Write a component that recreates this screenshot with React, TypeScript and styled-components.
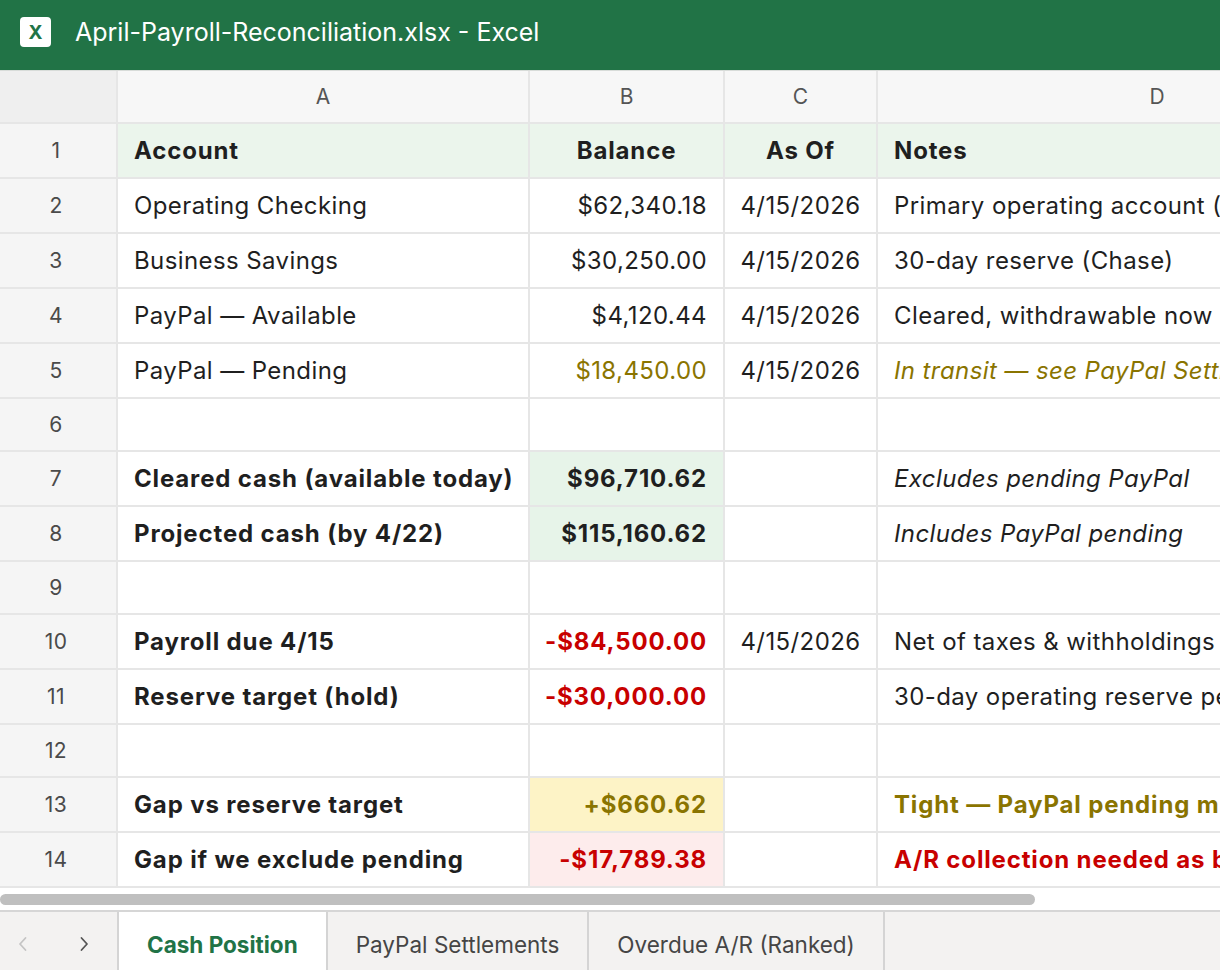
import React from 'react';
import styled, { createGlobalStyle, css } from 'styled-components';

const GlobalStyle = createGlobalStyle`
  html, body {
    margin: 0;
    padding: 0;
    background: #ffffff;
  }
  body {
    font-family: Inter, "Noto Sans", "Liberation Sans", sans-serif;
    color: #1f1f1f;
    overflow: hidden;
  }
`;

// Palette
const GREEN = '#217346';
const GOLD = '#8a7400';
const RED = '#c80000';
const GRID = '#e6e6e6';

type Tone = 'default' | 'gold' | 'red';
type Fill = 'none' | 'green' | 'yellow' | 'pink' | 'head';
type Align = 'left' | 'center' | 'right';

interface CellData {
  text?: string;
  align?: Align;
  bold?: boolean;
  italic?: boolean;
  tone?: Tone;
  fill?: Fill;
}

interface RowData {
  num: number;
  empty?: boolean;
  cells: CellData[];
}

const fills: Record<Fill, string> = {
  none: '#ffffff',
  green: '#e7f4e9',
  yellow: '#fdf3c6',
  pink: '#fdecec',
  head: '#ebf5ec',
};

const tones: Record<Tone, string> = {
  default: '#1f1f1f',
  gold: GOLD,
  red: RED,
};

const Window = styled.div`
  display: flex;
  flex-direction: column;
  width: 1220px;
  height: 970px;
  overflow: hidden;
`;

const TitleBar = styled.header`
  display: flex;
  align-items: center;
  gap: 24px;
  height: 71px;
  padding: 0 0 6px 20px;
  box-sizing: border-box;
  background: ${GREEN};
  border-bottom: 1px solid #d8dcd9;
  flex-shrink: 0;
`;

const AppIcon = styled.div`
  display: flex;
  align-items: center;
  justify-content: center;
  width: 31px;
  height: 30px;
  border-radius: 4px;
  background: #ffffff;
  color: ${GREEN};
  font-weight: 700;
  font-size: 19px;
`;

const Title = styled.h1`
  margin: 0;
  color: #ffffff;
  font-size: 25px;
  font-weight: 400;
  letter-spacing: 0;
`;

const Sheet = styled.div`
  display: grid;
  grid-template-columns: 118px 412px 195px 153px 560px;
  width: max-content;
  flex-shrink: 0;
`;

const Corner = styled.div`
  height: 51px;
  background: #efefef;
  border-right: 2px solid ${GRID};
  border-bottom: 2px solid ${GRID};
`;

const ColHeader = styled.div`
  display: flex;
  align-items: center;
  justify-content: center;
  height: 51px;
  background: #f7f7f7;
  color: #555555;
  font-size: 21px;
  border-right: 2px solid ${GRID};
  border-bottom: 2px solid ${GRID};
`;

const RowHeader = styled.div<{ $empty?: boolean }>`
  display: flex;
  align-items: center;
  justify-content: center;
  height: ${({ $empty }) => ($empty ? 51 : 53)}px;
  padding-right: 4px;
  background: #f5f5f5;
  color: #4a4a4a;
  font-size: 21px;
  letter-spacing: 0.4px;
  border-right: 2px solid ${GRID};
  border-bottom: 2px solid ${GRID};
`;

const Cell = styled.div<{
  $empty?: boolean;
  $align: Align;
  $bold?: boolean;
  $italic?: boolean;
  $tone: Tone;
  $fill: Fill;
}>`
  display: flex;
  align-items: center;
  justify-content: ${({ $align }) =>
    $align === 'right' ? 'flex-end' : $align === 'center' ? 'center' : 'flex-start'};
  height: ${({ $empty }) => ($empty ? 51 : 53)}px;
  padding: 0 16px;
  background: ${({ $fill }) => fills[$fill]};
  color: ${({ $tone }) => tones[$tone]};
  font-size: 24px;
  font-weight: ${({ $bold }) => ($bold ? 700 : 400)};
  letter-spacing: ${({ $bold }) => ($bold ? 0.85 : 0.4)}px;
  white-space: nowrap;
  overflow: hidden;
  border-right: 2px solid ${GRID};
  border-bottom: 2px solid ${GRID};
  ${({ $italic }) =>
    $italic &&
    css`
      font-style: italic;
    `}
`;

const ScrollTrack = styled.div`
  display: flex;
  align-items: center;
  height: 22px;
  background: #ffffff;
  border-bottom: 2px solid #d6d6d6;
  flex-shrink: 0;
`;

const ScrollThumb = styled.div`
  width: 1035px;
  height: 11px;
  border-radius: 6px;
  background: #bfbfbf;
`;

const TabBar = styled.nav`
  display: flex;
  flex: 1;
  background: #f3f2f1;
`;

const NavButtons = styled.div`
  display: flex;
  align-items: center;
  justify-content: space-between;
  width: 117px;
  padding: 6px 26px 0 16px;
  box-sizing: border-box;
`;

const NavArrow = styled.span<{ $disabled?: boolean }>`
  display: flex;
  color: ${({ $disabled }) => ($disabled ? '#c4c4c4' : '#555555')};
`;

const Tab = styled.div<{ $active?: boolean }>`
  display: flex;
  align-items: center;
  padding: 6px 28px 0;
  font-size: 22.5px;
  border-left: 2px solid #d4d4d4;
  background: ${({ $active }) => ($active ? '#ffffff' : 'transparent')};
  color: ${({ $active }) => ($active ? GREEN : '#454545')};
  font-weight: ${({ $active }) => ($active ? 700 : 400)};
  white-space: nowrap;
`;

const TabEnd = styled.div`
  border-left: 2px solid #d4d4d4;
`;

const rows: RowData[] = [
  {
    num: 1,
    cells: [
      { text: 'Account', bold: true, fill: 'head' },
      { text: 'Balance', bold: true, align: 'center', fill: 'head' },
      { text: 'As Of', bold: true, align: 'center', fill: 'head' },
      { text: 'Notes', bold: true, fill: 'head' },
    ],
  },
  {
    num: 2,
    cells: [
      { text: 'Operating Checking' },
      { text: '$62,340.18', align: 'right' },
      { text: '4/15/2026', align: 'center' },
      { text: 'Primary operating account (Chase)' },
    ],
  },
  {
    num: 3,
    cells: [
      { text: 'Business Savings' },
      { text: '$30,250.00', align: 'right' },
      { text: '4/15/2026', align: 'center' },
      { text: '30-day reserve (Chase)' },
    ],
  },
  {
    num: 4,
    cells: [
      { text: 'PayPal — Available' },
      { text: '$4,120.44', align: 'right' },
      { text: '4/15/2026', align: 'center' },
      { text: 'Cleared, withdrawable now' },
    ],
  },
  {
    num: 5,
    cells: [
      { text: 'PayPal — Pending' },
      { text: '$18,450.00', align: 'right', tone: 'gold' },
      { text: '4/15/2026', align: 'center' },
      { text: 'In transit — see PayPal Settlements', italic: true, tone: 'gold' },
    ],
  },
  { num: 6, empty: true, cells: [{}, {}, {}, {}] },
  {
    num: 7,
    cells: [
      { text: 'Cleared cash (available today)', bold: true },
      { text: '$96,710.62', align: 'right', bold: true, fill: 'green' },
      {},
      { text: 'Excludes pending PayPal', italic: true },
    ],
  },
  {
    num: 8,
    cells: [
      { text: 'Projected cash (by 4/22)', bold: true },
      { text: '$115,160.62', align: 'right', bold: true, fill: 'green' },
      {},
      { text: 'Includes PayPal pending', italic: true },
    ],
  },
  { num: 9, empty: true, cells: [{}, {}, {}, {}] },
  {
    num: 10,
    cells: [
      { text: 'Payroll due 4/15', bold: true },
      { text: '-$84,500.00', align: 'right', bold: true, tone: 'red' },
      { text: '4/15/2026', align: 'center' },
      { text: 'Net of taxes & withholdings' },
    ],
  },
  {
    num: 11,
    cells: [
      { text: 'Reserve target (hold)', bold: true },
      { text: '-$30,000.00', align: 'right', bold: true, tone: 'red' },
      {},
      { text: '30-day operating reserve per policy' },
    ],
  },
  { num: 12, empty: true, cells: [{}, {}, {}, {}] },
  {
    num: 13,
    cells: [
      { text: 'Gap vs reserve target', bold: true },
      { text: '+$660.62', align: 'right', bold: true, tone: 'gold', fill: 'yellow' },
      {},
      { text: 'Tight — PayPal pending must clear by 4/22', bold: true, tone: 'gold' },
    ],
  },
  {
    num: 14,
    cells: [
      { text: 'Gap if we exclude pending', bold: true },
      { text: '-$17,789.38', align: 'right', bold: true, tone: 'red', fill: 'pink' },
      {},
      { text: 'A/R collection needed as backup', bold: true, tone: 'red' },
    ],
  },
];

const Chevron: React.FC<{ dir: 'left' | 'right' }> = ({ dir }) => (
  <svg width="14" height="18" viewBox="0 0 14 18" fill="none">
    <path
      d={dir === 'left' ? 'M9.5 3 L4 9 L9.5 15' : 'M4.5 3 L10 9 L4.5 15'}
      stroke="currentColor"
      strokeWidth="1.8"
      strokeLinecap="round"
      strokeLinejoin="round"
    />
  </svg>
);

export default function App() {
  return (
    <>
      <GlobalStyle />
      <Window>
        <TitleBar>
          <AppIcon>X</AppIcon>
          <Title>April-Payroll-Reconciliation.xlsx - Excel</Title>
        </TitleBar>

        <Sheet>
          <Corner />
          {['A', 'B', 'C', 'D'].map((col) => (
            <ColHeader key={col}>{col}</ColHeader>
          ))}
          {rows.map((row) => (
            <React.Fragment key={row.num}>
              <RowHeader $empty={row.empty}>{row.num}</RowHeader>
              {row.cells.map((cell, i) => (
                <Cell
                  key={i}
                  $empty={row.empty}
                  $align={cell.align ?? 'left'}
                  $bold={cell.bold}
                  $italic={cell.italic}
                  $tone={cell.tone ?? 'default'}
                  $fill={cell.fill ?? 'none'}
                >
                  {cell.text}
                </Cell>
              ))}
            </React.Fragment>
          ))}
        </Sheet>

        <ScrollTrack>
          <ScrollThumb />
        </ScrollTrack>

        <TabBar>
          <NavButtons>
            <NavArrow $disabled>
              <Chevron dir="left" />
            </NavArrow>
            <NavArrow>
              <Chevron dir="right" />
            </NavArrow>
          </NavButtons>
          <Tab $active>Cash Position</Tab>
          <Tab>PayPal Settlements</Tab>
          <Tab>Overdue A/R (Ranked)</Tab>
          <TabEnd />
        </TabBar>
      </Window>
    </>
  );
}
